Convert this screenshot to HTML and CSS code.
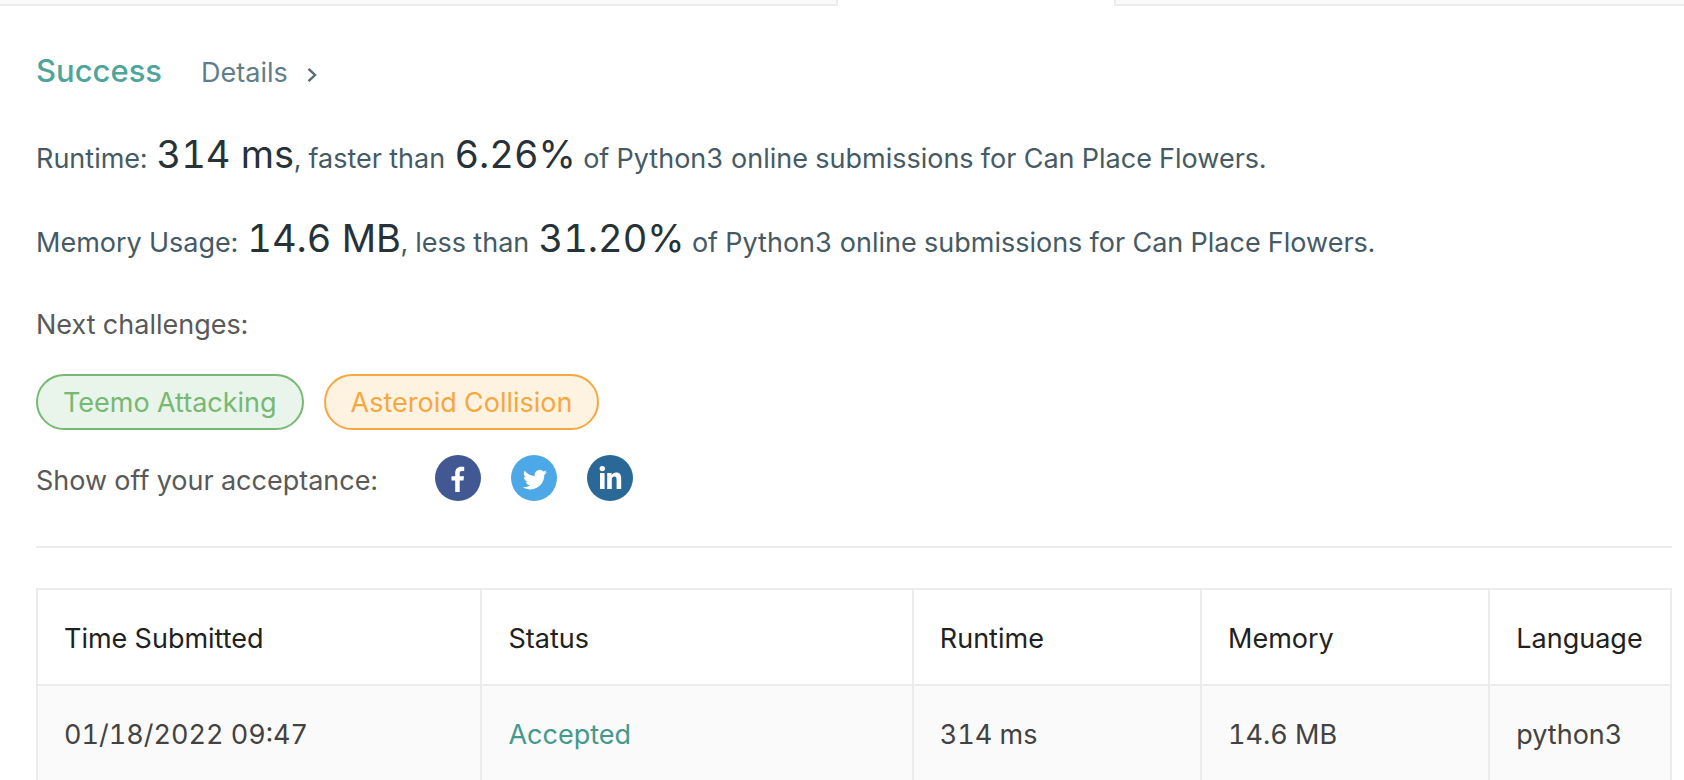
FILE: index.html
```html
<!DOCTYPE html>
<html lang="en">
<head>
<meta charset="utf-8">
<title>Submission Result</title>
<link rel="stylesheet" href="styles.css">
</head>
<body>
<div class="tabs"><div class="tab-left"></div><div class="tab-active"></div><div class="tab-right"></div></div>
<main class="content">
  <header class="result">
    <h1 class="status">Success</h1>
    <a class="details" href="#">Details
      <svg class="chevron" viewBox="0 0 10 14" aria-hidden="true"><path d="M1.500 .8 8 7l-6.500 6.200"/></svg>
    </a>
  </header>
  <p class="stat">Runtime: <span class="value">314 ms</span>, faster than <span class="value">6.26%</span> of Python3 online submissions for Can Place Flowers.</p>
  <p class="stat">Memory Usage: <span class="value">14.6 MB</span>, less than <span class="value">31.20%</span> of Python3 online submissions for Can Place Flowers.</p>
  <h2 class="label">Next challenges:</h2>
  <nav class="challenges">
    <a class="pill easy" href="#">Teemo Attacking</a>
    <a class="pill medium" href="#">Asteroid Collision</a>
  </nav>
  <div class="share">
    <span class="label">Show off your acceptance:</span>
    <div class="socials">
      <a href="#" aria-label="Facebook"><svg viewBox="0 0 46 46"><circle cx="23" cy="23" r="23" fill="#425893"/><path fill="#fff" d="M20.200 37V25.500H16.500V21.300H20.200V18.300C20.200 14 22.400 11.700 26.200 11.700H29.200V16H27.100C25.300 16 24.700 16.800 24.700 18.400V21.300H29L28.500 25.500H24.700V37Z"/></svg></a>
      <a href="#" aria-label="Twitter"><svg viewBox="0 0 46 46"><circle cx="23" cy="23" r="23" fill="#4da8e8"/><path fill="#fff" transform="translate(11.500 12.500)" d="M24.500 4.600c-.9.400-1.800.7-2.800.8 1-.6 1.800-1.600 2.200-2.700-1 .6-2 1-3.100 1.200A5 5 0 0 0 12.300 8.400C8.200 8.200 4.500 6.200 2.100 3.200A5 5 0 0 0 3.600 9.800c-.8 0-1.600-.2-2.200-.6v.1c0 2.400 1.700 4.400 3.900 4.800-.7.200-1.500.2-2.200.1.600 2 2.400 3.400 4.600 3.400A10 10 0 0 1 .3 19.700c2.200 1.400 4.800 2.200 7.500 2.200 9.100 0 14.300-7.700 14-14.600 1.100-.7 2-1.600 2.700-2.700Z"/></svg></a>
      <a href="#" aria-label="LinkedIn"><svg viewBox="0 0 46 46"><circle cx="23" cy="23" r="23" fill="#2a6897"/><g fill="#fff"><circle cx="15.300" cy="13.600" r="2.700"/><path d="M13 18h4.600v16H13ZM20.200 18h4.400v2.200c.9-1.600 2.500-2.600 4.600-2.600 4 0 5 2.600 5 6.500V34h-4.600v-8.800c0-2.200-.3-3.700-2.200-3.700s-2.600 1.500-2.600 3.700V34h-4.600Z"/></g></svg></a>
    </div>
  </div>
  <hr class="divider">
  <table class="submissions">
    <colgroup><col class="c-time"><col class="c-status"><col class="c-runtime"><col class="c-memory"><col class="c-lang"></colgroup>
    <thead><tr><th>Time Submitted</th><th>Status</th><th>Runtime</th><th>Memory</th><th>Language</th></tr></thead>
    <tbody><tr><td>01/18/2022 09:47</td><td><a class="accepted" href="#">Accepted</a></td><td>314 ms</td><td>14.6 MB</td><td>python3</td></tr></tbody>
  </table>
</main>
</body>
</html>
```
FILE: styles.css
```css
* { box-sizing: border-box; }
html { overflow: hidden; }
body {
  margin: 0;
  background: #fff;
  color: #424242;
  font: 400 27px/40px Inter, "Liberation Sans", sans-serif;
  font-variant-numeric: tabular-nums;
}
a { color: inherit; text-decoration: none; }

.tabs { display: grid; grid-template-columns: 838fr 276fr 570fr; height: 6px; }
.tab-left, .tab-right { background: #fafafa; border-bottom: 2px solid #ececec; }
.tab-left { border-right: 2px solid #ececec; }
.tab-right { border-left: 2px solid #ececec; }

.content { padding: 45px 12px 0 36px; }

.result { display: flex; align-items: baseline; gap: 39px; margin-bottom: 41px; }
.status { margin: 0; font-size: 31px; font-weight: 500; color: #4fa59a; }
.details { display: flex; align-items: center; gap: 19px; color: #607d8b; }
.chevron { width: 10px; height: 14px; margin-top: 3px; fill: none; stroke: #546e7a; stroke-width: 2.4; }

.stat { margin: 0 0 35px; line-height: 48px; color: #455a64; }
.value { margin-left: 2px; font-size: 38px; line-height: 40px; color: #263238; }

.label { margin: 0; font-size: 27px; font-weight: 400; color: #595959; }
.stat + .label { margin-top: 38px; }
.challenges { display: flex; gap: 20px; margin: 29px 0 25px; }
.pill { padding: 7px 25px 5px; border: 2px solid; border-radius: 28px; }
.easy { color: #77b872; background: #e9f4ea; }
.medium { color: #f5a83f; background: #fef2e1; }

.share { display: flex; gap: 57px; }
.share .label { padding-top: 6px; }
.socials { display: flex; gap: 30px; }
.socials a, .socials svg { display: block; width: 46px; height: 46px; }

.divider { margin: 45px 0 40px; border: 0; border-top: 2px solid #ececec; }

.submissions { width: 100%; table-layout: fixed; border-collapse: collapse; }
.submissions th, .submissions td {
  height: 96px;
  padding: 4px 26px 0;
  border: 2px solid #ececec;
  text-align: left;
  font-weight: 400;
  white-space: nowrap;
}
.submissions th { color: #212121; }
.submissions td { background: #fafafa; }
.submissions .accepted { color: #43998b; }
.c-time { width: 27.200%; }
.c-status { width: 26.400%; }
.c-runtime, .c-memory { width: 17.640%; }
```
